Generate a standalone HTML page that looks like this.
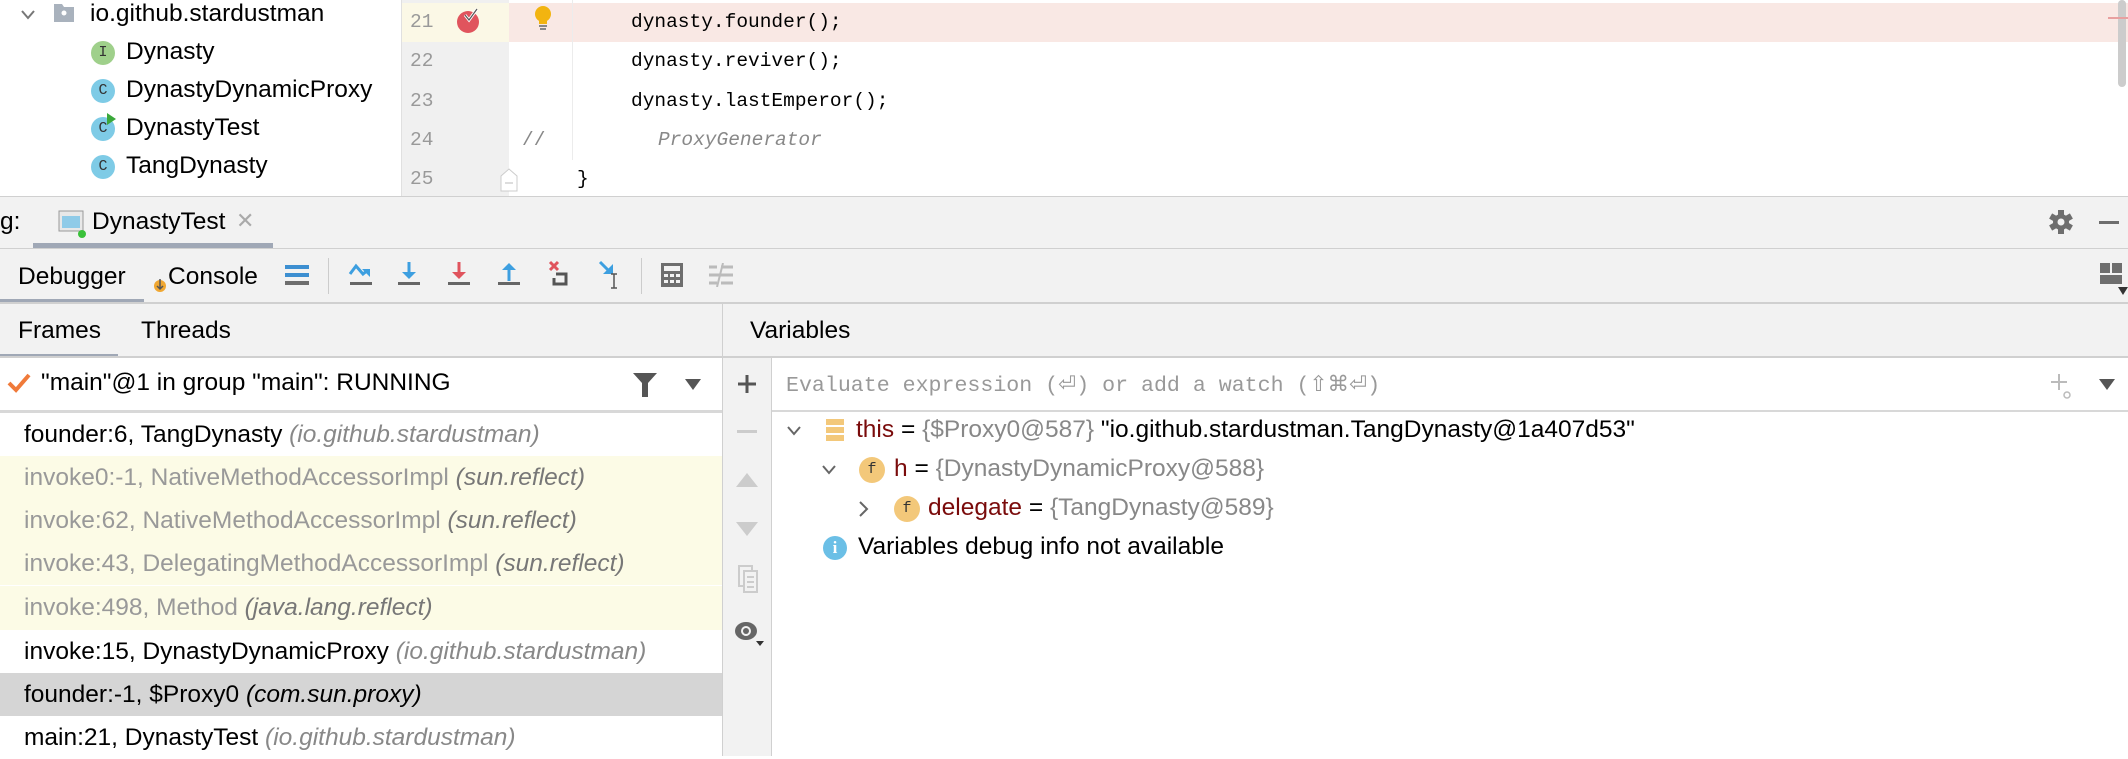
<!DOCTYPE html>
<html><head><meta charset="utf-8"><style>
*{margin:0;padding:0;box-sizing:border-box}
body{width:2128px;height:756px;overflow:hidden;background:#fff;font-family:"Liberation Sans",sans-serif;font-size:24.5px;color:#000;position:relative}
.a{position:absolute;white-space:nowrap}
.m{font-family:"Liberation Mono",monospace;font-size:19.5px}
.ci{position:absolute;width:24px;height:24px;border-radius:50%;font-size:15px;text-align:center;line-height:24px;color:#333;font-family:"Liberation Mono",monospace}
.g{color:#888}
.i{font-style:italic;color:#888}
.fr{position:absolute;left:0;width:722px;height:43px;line-height:43px;padding-left:24px;white-space:nowrap}
.yl{color:#999}
</style></head><body>
<div class="a" style="left:0;top:0;width:401px;height:196px;background:#fff"></div>
<svg class="a" style="left:20px;top:8px" width="16" height="14"><path d="M2 3 L8 10 L14 3" fill="none" stroke="#777" stroke-width="2"/></svg>
<svg class="a" style="left:54px;top:4px" width="20" height="18"><path d="M0 0 H8 L10 3 H20 V18 H0Z" fill="#a9b2bd"/><circle cx="10" cy="9" r="2.5" fill="#fff"/></svg>
<div class="a" style="left:90px;top:0px">io.github.stardustman</div>
<div class="ci" style="left:91px;top:41px;background:#9fd08b">I</div><div class="a" style="left:126px;top:38px">Dynasty</div>
<div class="ci" style="left:91px;top:79px;background:#7ecbe6">C</div><div class="a" style="left:126px;top:76px">DynastyDynamicProxy</div>
<div class="ci" style="left:91px;top:117px;background:#7ecbe6">C</div><svg class="a" style="left:107px;top:113px" width="10" height="12"><path d="M0 0 L9 6 L0 12Z" fill="#3aa83a"/></svg><div class="a" style="left:126px;top:114px">DynastyTest</div>
<div class="ci" style="left:91px;top:155px;background:#7ecbe6">C</div><div class="a" style="left:126px;top:152px">TangDynasty</div>
<div class="a" style="left:401px;top:0;width:108px;height:196px;background:#f0f0f0;border-left:1px solid #e0e0e0"></div>
<div class="a" style="left:402px;top:3px;width:107px;height:39px;background:#fbf8e6"></div>
<div class="a" style="left:509px;top:3px;width:1619px;height:39px;background:#f9e8e4"></div>
<div class="a" style="left:572px;top:0;width:1px;height:160px;background:#ececec"></div>
<div class="a m" style="left:410px;top:11px;color:#999">21</div>
<div class="a m" style="left:410px;top:50px;color:#999">22</div>
<div class="a m" style="left:410px;top:90px;color:#999">23</div>
<div class="a m" style="left:410px;top:129px;color:#999">24</div>
<div class="a m" style="left:410px;top:168px;color:#999">25</div>
<svg class="a" style="left:456px;top:6px" width="28" height="30"><circle cx="12" cy="16" r="11" fill="#e0545d"/><path d="M9 9 L13 14 L21 3" fill="none" stroke="#fff" stroke-width="3"/><path d="M9 9 L13 14 L21 3" fill="none" stroke="#555" stroke-width="1.2"/></svg>
<svg class="a" style="left:533px;top:4px" width="20" height="28"><circle cx="10" cy="10" r="8" fill="#f2b410"/><rect x="6" y="17" width="8" height="3" fill="#f2b410"/><rect x="6" y="21" width="8" height="2" fill="#888"/><rect x="7" y="24" width="6" height="2" fill="#888"/></svg>
<svg class="a" style="left:500px;top:168px" width="18" height="24"><path d="M1 8 L9 1 L17 8 V23 H1Z" fill="#fff" stroke="#ccc"/><path d="M5 15 H13" stroke="#bbb"/></svg>
<div class="a m" style="left:631px;top:11px">dynasty.founder();</div>
<div class="a m" style="left:631px;top:50px">dynasty.reviver();</div>
<div class="a m" style="left:631px;top:90px">dynasty.lastEmperor();</div>
<div class="a m" style="left:522px;top:129px;color:#888">//</div>
<div class="a m" style="left:658px;top:129px;color:#888;font-style:italic">ProxyGenerator</div>
<div class="a m" style="left:577px;top:168px">}</div>
<div class="a" style="left:2118px;top:0;width:8px;height:87px;background:#ccc;border-radius:4px"></div>
<div class="a" style="left:2108px;top:17px;width:20px;height:2px;background:#e8a0a0"></div>
<div class="a" style="left:0;top:196px;width:2128px;height:560px;background:#f2f2f2"></div>
<div class="a" style="left:0;top:196px;width:2128px;height:1px;background:#d0d0d0"></div>
<div class="a" style="left:0;top:208px">g:</div>
<svg class="a" style="left:58px;top:210px" width="28" height="28"><rect x="1" y="1" width="24" height="20" fill="#e8e8e8" stroke="#999"/><rect x="4" y="6" width="18" height="12" fill="#8fcbe8"/><circle cx="24" cy="24" r="4" fill="#3ac13a"/></svg>
<div class="a" style="left:92px;top:208px">DynastyTest</div>
<div class="a" style="left:236px;top:208px;color:#aaa;font-size:22px">✕</div>
<div class="a" style="left:33px;top:243px;width:240px;height:5px;background:#a0a8b6"></div>
<svg class="a" style="left:2048px;top:209px" width="26" height="26"><g fill="#6e6e6e"><rect x="10" y="1" width="6" height="24"/><rect x="10" y="1" width="6" height="24" transform="rotate(60 13 13)"/><rect x="10" y="1" width="6" height="24" transform="rotate(120 13 13)"/><circle cx="13" cy="13" r="8"/></g><circle cx="13" cy="13" r="3.5" fill="#f2f2f2"/></svg>
<div class="a" style="left:2099px;top:221px;width:20px;height:3px;background:#6e6e6e"></div>
<div class="a" style="left:0;top:248px;width:2128px;height:1px;background:#d0d0d0"></div>
<div class="a" style="left:18px;top:263px">Debugger</div>
<div class="a" style="left:0;top:299px;width:144px;height:4px;background:#a0a8b6"></div>
<svg class="a" style="left:153px;top:277px" width="14" height="16"><circle cx="7" cy="9" r="6" fill="#f0a732"/><path d="M7 2 V12 M4 9 L7 12 L10 9" stroke="#555" stroke-width="1.5" fill="none"/></svg>
<div class="a" style="left:168px;top:263px">Console</div>
<div class="a" style="left:285px;top:265px;width:24px;height:4px;background:#3d8fd1"></div>
<div class="a" style="left:285px;top:273px;width:24px;height:4px;background:#3d8fd1"></div>
<div class="a" style="left:285px;top:281px;width:24px;height:4px;background:#6e6e6e"></div>
<div class="a" style="left:328px;top:258px;width:1px;height:36px;background:#ccc"></div>
<svg class="a" style="left:348px;top:260px" width="300" height="36">
<path d="M2 14 L8 6 L15 14 L20 10" fill="none" stroke="#3d9fe0" stroke-width="3"/><path d="M14 9 L22 9 L22 17Z" fill="#3d9fe0"/><rect x="2" y="22" width="22" height="3" fill="#666"/>
<path d="M61 2 V16" stroke="#3d9fe0" stroke-width="3"/><path d="M54 12 L61 19 L68 12Z" fill="#3d9fe0"/><rect x="50" y="22" width="22" height="3" fill="#666"/>
<path d="M111 2 V16" stroke="#e0545d" stroke-width="3"/><path d="M104 12 L111 19 L118 12Z" fill="#e0545d"/><rect x="100" y="22" width="22" height="3" fill="#666"/>
<path d="M161 8 V21" stroke="#3d9fe0" stroke-width="3"/><path d="M154 10 L161 3 L168 10Z" fill="#3d9fe0"/><rect x="150" y="22" width="22" height="3" fill="#666"/>
<path d="M202 2 L210 10 M210 2 L202 10" stroke="#e0545d" stroke-width="3"/><path d="M208 14 H218 V24 H206 V18" fill="none" stroke="#555" stroke-width="3"/>
<path d="M252 2 L262 12" stroke="#3d9fe0" stroke-width="3"/><path d="M255 14 L265 14 L265 4Z" fill="#3d9fe0"/><path d="M266 14 V28 M263 14 H269 M263 28 H269" stroke="#555" stroke-width="1.5"/>
</svg>
<div class="a" style="left:641px;top:258px;width:1px;height:36px;background:#ccc"></div>
<svg class="a" style="left:660px;top:262px" width="26" height="26"><rect x="1" y="1" width="22" height="24" fill="#6e6e6e"/><rect x="4" y="4" width="16" height="5" fill="#f2f2f2"/><g fill="#f2f2f2"><rect x="4" y="12" width="4" height="3"/><rect x="10" y="12" width="4" height="3"/><rect x="16" y="12" width="4" height="3"/><rect x="4" y="18" width="4" height="3"/><rect x="10" y="18" width="4" height="3"/><rect x="16" y="18" width="4" height="3"/></g></svg>
<svg class="a" style="left:709px;top:263px" width="26" height="24"><g stroke="#bbb" stroke-width="3"><path d="M0 4 H8 M12 4 H24 M0 12 H24 M0 20 H8 M12 20 H24"/><path d="M14 0 L8 24" stroke-width="2"/></g></svg>
<svg class="a" style="left:2100px;top:263px" width="28" height="34"><rect x="0" y="0" width="10" height="10" fill="#6e6e6e"/><rect x="12" y="0" width="10" height="10" fill="#6e6e6e"/><rect x="0" y="12" width="22" height="9" fill="#6e6e6e"/><path d="M18 24 L28 24 L23 32Z" fill="#333"/></svg>
<div class="a" style="left:0;top:302px;width:2128px;height:2px;background:#d0d0d0"></div>
<div class="a" style="left:18px;top:317px">Frames</div>
<div class="a" style="left:141px;top:317px">Threads</div>
<div class="a" style="left:0;top:354px;width:118px;height:4px;background:#a0a8b6"></div>
<div class="a" style="left:750px;top:317px">Variables</div>
<div class="a" style="left:722px;top:304px;width:1px;height:452px;background:#d0d0d0"></div>
<div class="a" style="left:0;top:356px;width:2128px;height:2px;background:#d0d0d0"></div>
<div class="a" style="left:0;top:358px;width:722px;height:52px;background:#fff"></div>
<svg class="a" style="left:7px;top:373px" width="24" height="20"><path d="M2 10 L9 17 L22 2" fill="none" stroke="#f07a3a" stroke-width="4"/></svg>
<div class="a" style="left:41px;top:369px">"main"@1 in group "main": RUNNING</div>
<svg class="a" style="left:633px;top:373px" width="24" height="24"><path d="M0 0 H24 L15 10 V24 H9 V10Z" fill="#555"/></svg>
<svg class="a" style="left:685px;top:379px" width="16" height="12"><path d="M0 0 H16 L8 11Z" fill="#555"/></svg>
<div class="a" style="left:0;top:410px;width:722px;height:3px;background:#d8d8d8"></div>
<div class="a" style="left:0;top:413px;width:722px;height:343px;background:#fff"></div>
<div class="fr" style="top:413px">founder:6, TangDynasty <span class="i">(io.github.stardustman)</span></div>
<div class="fr yl" style="top:456px;background:#fcfbe6">invoke0:-1, NativeMethodAccessorImpl <span style="font-style:italic;color:#777">(sun.reflect)</span></div>
<div class="fr yl" style="top:499px;background:#fcfbe6">invoke:62, NativeMethodAccessorImpl <span style="font-style:italic;color:#777">(sun.reflect)</span></div>
<div class="fr yl" style="top:542px;background:#fcfbe6">invoke:43, DelegatingMethodAccessorImpl <span style="font-style:italic;color:#777">(sun.reflect)</span></div>
<div class="fr yl" style="top:586px;background:#fcfbe6;height:44px">invoke:498, Method <span style="font-style:italic;color:#777">(java.lang.reflect)</span></div>
<div class="fr" style="top:630px">invoke:15, DynastyDynamicProxy <span class="i">(io.github.stardustman)</span></div>
<div class="fr" style="top:673px;background:#d5d5d5">founder:-1, $Proxy0 <span style="font-style:italic">(com.sun.proxy)</span></div>
<div class="fr" style="top:716px">main:21, DynastyTest <span class="i">(io.github.stardustman)</span></div>
<div class="a" style="left:771px;top:358px;width:1px;height:398px;background:#d0d0d0"></div>
<svg class="a" style="left:735px;top:372px" width="24" height="24"><path d="M12 3 V21 M3 12 H21" stroke="#555" stroke-width="3"/></svg>
<div class="a" style="left:737px;top:430px;width:20px;height:3px;background:#ccc"></div>
<svg class="a" style="left:736px;top:471px" width="22" height="16"><path d="M0 16 L11 2 L22 16Z" fill="#ccc"/></svg>
<svg class="a" style="left:736px;top:522px" width="22" height="16"><path d="M0 0 L11 14 L22 0Z" fill="#ccc"/></svg>
<svg class="a" style="left:738px;top:565px" width="20" height="28"><rect x="1" y="1" width="13" height="20" fill="none" stroke="#ccc" stroke-width="2"/><rect x="6" y="6" width="13" height="21" fill="#f2f2f2" stroke="#ccc" stroke-width="2"/><path d="M9 12 H16 M9 17 H16 M9 22 H16" stroke="#ccc" stroke-width="2"/></svg>
<svg class="a" style="left:734px;top:620px" width="32" height="26"><ellipse cx="12" cy="11" rx="11" ry="9" fill="#666"/><circle cx="12" cy="11" r="5" fill="#f2f2f2"/><circle cx="12" cy="11" r="3" fill="#666"/><path d="M22 21 H30 L26 26Z" fill="#333"/></svg>
<div class="a" style="left:772px;top:358px;width:1356px;height:398px;background:#fff"></div>
<div class="a m" style="left:786px;top:372px;color:#999;font-size:21.6px">Evaluate expression (⏎) or add a watch (⇧⌘⏎)</div>
<svg class="a" style="left:2047px;top:372px" width="26" height="28"><path d="M12 2 V18 M4 10 H20" stroke="#bbb" stroke-width="2"/><circle cx="20" cy="23" r="3" fill="none" stroke="#bbb" stroke-width="1.5"/></svg>
<svg class="a" style="left:2099px;top:379px" width="16" height="12"><path d="M0 0 H16 L8 11Z" fill="#555"/></svg>
<div class="a" style="left:772px;top:410px;width:1356px;height:2px;background:#d8d8d8"></div>
<svg class="a" style="left:786px;top:425px" width="16" height="12"><path d="M2 2 L8 9 L14 2" fill="none" stroke="#666" stroke-width="2"/></svg>
<svg class="a" style="left:826px;top:419px" width="20" height="24"><rect x="0" y="0" width="18" height="6" fill="#f3c87a"/><rect x="0" y="8" width="18" height="6" fill="#f3c87a"/><rect x="0" y="16" width="18" height="6" fill="#f3c87a"/></svg>
<div class="a" style="left:856px;top:416px"><span style="color:#7a0b0b">this</span> = <span class="g">{$Proxy0@587}</span> "io.github.stardustman.TangDynasty@1a407d53"</div>
<svg class="a" style="left:821px;top:464px" width="16" height="12"><path d="M2 2 L8 9 L14 2" fill="none" stroke="#666" stroke-width="2"/></svg>
<div class="ci" style="left:859px;top:457px;background:#f3c87a;width:26px;height:26px;line-height:26px">f</div>
<div class="a" style="left:894px;top:455px"><span style="color:#7a0b0b">h</span> = <span class="g">{DynastyDynamicProxy@588}</span></div>
<svg class="a" style="left:858px;top:500px" width="12" height="18"><path d="M2 2 L9 9 L2 16" fill="none" stroke="#666" stroke-width="2"/></svg>
<div class="ci" style="left:894px;top:496px;background:#f3c87a;width:26px;height:26px;line-height:26px">f</div>
<div class="a" style="left:928px;top:494px"><span style="color:#7a0b0b">delegate</span> = <span class="g">{TangDynasty@589}</span></div>
<div class="ci" style="left:823px;top:536px;background:#6bbfe6;color:#fff;font-weight:bold;font-family:'Liberation Serif',serif;font-size:17px">i</div>
<div class="a" style="left:858px;top:533px">Variables debug info not available</div>
</body></html>
